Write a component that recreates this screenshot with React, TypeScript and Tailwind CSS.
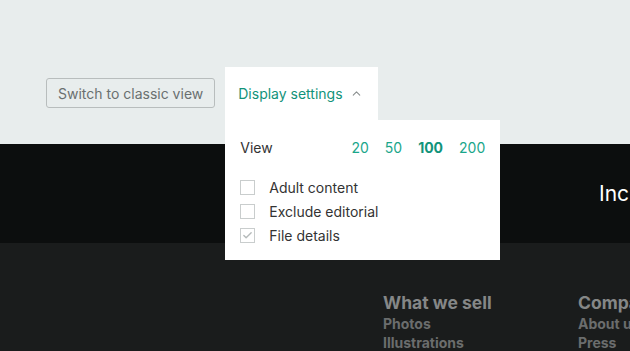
import { ChevronUp, Check } from "lucide-react";

const sizes = [20, 50, 100, 200];

const options = [
  { label: "Adult content", checked: false },
  { label: "Exclude editorial", checked: false },
  { label: "File details", checked: true },
];

function DisplaySettings() {
  return (
    <div className="relative ml-[10px]">
      <button className="flex h-[53px] w-[153px] items-center gap-[7px] bg-white pl-[13px] text-[14px] text-[#12937a]">
        Display settings
        <ChevronUp className="h-[13px] w-[13px] text-[#8a8f8f]" strokeWidth={2} />
      </button>

      {/* dropdown panel */}
      <div className="absolute left-0 top-full z-10 w-[275px] bg-white px-[15px] pb-[16px] pt-[17px]">
        <div className="flex items-center justify-between">
          <span className="text-[14px] text-[#333]">View</span>
          <div className="flex gap-[16px] text-[14px] text-[#1aa68a]">
            {sizes.map((s) => (
              <span key={s} className={s === 100 ? "font-bold text-[#12937a]" : ""}>
                {s}
              </span>
            ))}
          </div>
        </div>

        <div className="mt-[20px] flex flex-col gap-[6px]">
          {options.map((o) => (
            <label key={o.label} className="flex h-[18px] items-center gap-[14px] text-[14px] text-[#333]">
              <span className="flex h-[15px] w-[15px] items-center justify-center border border-[#c9cdcd] bg-white">
                {o.checked && <Check className="h-[11px] w-[11px] text-[#b5baba]" strokeWidth={3} />}
              </span>
              {o.label}
            </label>
          ))}
        </div>
      </div>
    </div>
  );
}

export default function App() {
  return (
    <div className="h-[351px] w-[630px] overflow-hidden bg-[#1a1c1c] font-['Inter',sans-serif]">
      <div className="flex h-[144px] items-start bg-[#e8eded] pl-[46px] pt-[67px]">
        <button className="mt-[11px] h-[30px] rounded-[3px] border border-[#b8bdbd] px-[11px] text-[14px] text-[#6a7070]">
          Switch to classic view
        </button>
        <DisplaySettings />
      </div>

      <div className="flex h-[99px] items-center bg-[#0c0e0e] pl-[599px]">
        <span className="whitespace-nowrap text-[21px] text-white">Included</span>
      </div>

      <div className="flex pl-[383px] pt-[49px]">
        <div className="w-[195px] shrink-0">
          <h3 className="text-[17.5px] font-bold leading-[22px] text-[#858787]">What we sell</h3>
          <ul className="text-[14px] font-bold leading-[19px] text-[#6b6d6d]">
            <li>Photos</li>
            <li>Illustrations</li>
          </ul>
        </div>
        <div className="shrink-0">
          <h3 className="whitespace-nowrap text-[17.5px] font-bold leading-[22px] text-[#858787]">Company</h3>
          <ul className="whitespace-nowrap text-[14px] font-bold leading-[19px] text-[#6b6d6d]">
            <li>About us</li>
            <li>Press</li>
          </ul>
        </div>
      </div>
    </div>
  );
}
